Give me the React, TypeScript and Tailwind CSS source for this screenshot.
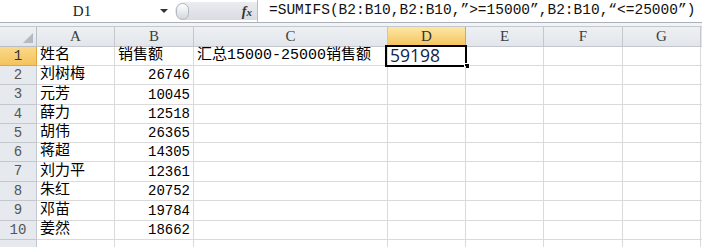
import React from 'react';

type Col = { key: string; w: string };

const cols: Col[] = [
  { key: 'A', w: 'w-[78px]' },
  { key: 'B', w: 'w-[79px]' },
  { key: 'C', w: 'w-[194px]' },
  { key: 'D', w: 'w-[78px]' },
  { key: 'E', w: 'w-[78px]' },
  { key: 'F', w: 'w-[79px]' },
  { key: 'G', w: 'w-[78px]' },
];

const rows = [
  { name: '姓名', amount: '销售额', h: 'h-[19px]' },
  { name: '刘树梅', amount: '26746', h: 'h-[19px]' },
  { name: '元芳', amount: '10045', h: 'h-[20px]' },
  { name: '薛力', amount: '12518', h: 'h-[19px]' },
  { name: '胡伟', amount: '26365', h: 'h-[19px]' },
  { name: '蒋超', amount: '14305', h: 'h-[19px]' },
  { name: '刘力平', amount: '12361', h: 'h-[20px]' },
  { name: '朱红', amount: '20752', h: 'h-[19px]' },
  { name: '邓苗', amount: '19784', h: 'h-[20px]' },
  { name: '姜然', amount: '18662', h: 'h-[19px]' },
];

const cjk = "font-['Liberation_Mono','Noto_Sans_CJK_SC',monospace]";

const FormulaBar = () => (
  <div className="flex h-[23px] border-b border-[#abb1b8] bg-white">
    <div className="flex w-[175px] items-center">
      <span className="flex-1 pl-[4px] text-center text-[15px] text-[#222] font-['Liberation_Serif',serif]">D1</span>
      <span className="mr-[7px] h-0 w-0 border-x-[4px] border-t-[4px] border-x-transparent border-t-[#333]" />
    </div>
    <div className="my-[2px] flex w-[82px] items-center justify-between rounded-l-full bg-gradient-to-b from-[#e9ecf0] to-[#d9dde3] pl-[1px] pr-[5px]">
      <span className="h-[17px] w-[13px] rounded-full border border-[#b0b6bf] bg-gradient-to-b from-white to-[#d3d8de]" />
      <span className="text-[14px] font-bold italic text-[#333] font-['Liberation_Serif',serif]">
        f<span className="text-[11px]">x</span>
      </span>
    </div>
    <div className="flex flex-1 items-center border-l border-[#b8bdc4] pl-[11px]">
      <span className="whitespace-nowrap text-[14.5px] text-[#111] font-['Liberation_Mono',monospace]">
        =SUMIFS(B2:B10,B2:B10,”&gt;=15000”,B2:B10,“&lt;=25000”)
      </span>
    </div>
  </div>
);

const HeaderRow = () => (
  <div className="flex h-[21px] border-t border-[#c4c8ce]">
    <div className="relative w-[37px] border-b border-r border-[#b9bec5] bg-gradient-to-b from-[#eef0f3] to-[#e2e6eb]">
      <svg className="absolute bottom-[3px] right-[3px]" width="10" height="10" viewBox="0 0 10 10">
        <polygon points="10,0 10,10 0,10" fill="#b5bac2" />
      </svg>
    </div>
    {cols.map((c) => (
      <div
        key={c.key}
        className={`${c.w} flex items-center justify-center border-b border-r text-[15px] font-['Liberation_Serif',serif] ${
          c.key === 'D'
            ? 'border-[#e3a63b] bg-gradient-to-b from-[#fde7a4] to-[#f4c35b] text-[#333]'
            : 'border-[#c4c8ce] bg-gradient-to-b from-[#eef0f3] to-[#e2e6eb] text-[#3d3d3d]'
        }`}
      >
        {c.key}
      </div>
    ))}
    <div className="flex-1 border-b border-[#c4c8ce] bg-[#e2e6eb]" />
  </div>
);

const Row = ({ i, name, amount, h }: { i: number; name: string; amount: string; h: string }) => {
  const first = i === 1;
  return (
    <div className={`flex ${h}`}>
      <div
        className={`flex w-[37px] items-center justify-center border-b border-r text-[14px] font-['Liberation_Mono',monospace] ${
          first
            ? 'border-[#e3a63b] bg-gradient-to-b from-[#fbd98a] to-[#f4c35b] text-[#333]'
            : 'border-[#c4c8ce] bg-[#e6e9ed] text-[#555]'
        }`}
      >
        {i}
      </div>
      <div className={`flex w-[78px] items-end border-b border-r border-[#dadada] pl-[3px] text-[15px] leading-[18px] text-black ${cjk}`}>
        {name}
      </div>
      <div
        className={`flex w-[79px] items-end border-b border-r border-[#dadada] leading-[18px] text-black ${
          first ? `pl-[3px] text-[15px] ${cjk}` : "justify-end pr-[3px] text-[14px] font-['Liberation_Mono',monospace]"
        }`}
      >
        {amount}
      </div>
      <div className={`flex w-[194px] items-end border-b border-r border-[#dadada] pl-[3px] text-[15px] leading-[18px] text-black ${cjk}`}>
        {first ? '汇总15000-25000销售额' : ''}
      </div>
      <div className="relative flex w-[78px] items-end border-b border-r border-[#dadada] pl-[2px]">
        {first && (
          <>
            <span className="text-[17.5px] leading-[19px] text-[#142448] font-['Open_Sans',sans-serif]">59198</span>
            <span className="absolute left-[-3px] top-[-2px] h-[22px] w-[82px] border-2 border-black" />
            <span className="absolute left-[76px] top-[16px] h-[6px] w-[6px] border border-white bg-black" />
          </>
        )}
      </div>
      <div className="w-[78px] border-b border-r border-[#dadada]" />
      <div className="w-[79px] border-b border-r border-[#dadada]" />
      <div className="w-[78px] border-b border-r border-[#dadada]" />
      <div className="flex-1 border-b border-[#dadada]" />
    </div>
  );
};

export default function App() {
  return (
    <div className="h-[247px] w-[702px] overflow-hidden bg-white">
      <FormulaBar />
      <div className="h-[3px] bg-[#f1f3f5]" />
      <HeaderRow />
      {rows.map((r, idx) => (
        <Row key={idx} i={idx + 1} name={r.name} amount={r.amount} h={r.h} />
      ))}
      <div className="flex h-[10px]">
        <div className="w-[37px] border-r border-[#c4c8ce] bg-[#e6e9ed]" />
        <div className="w-[78px] border-r border-[#dadada]" />
        <div className="w-[79px] border-r border-[#dadada]" />
        <div className="w-[194px] border-r border-[#dadada]" />
        <div className="w-[78px] border-r border-[#dadada]" />
        <div className="w-[78px] border-r border-[#dadada]" />
        <div className="w-[79px] border-r border-[#dadada]" />
        <div className="w-[78px] border-r border-[#dadada]" />
      </div>
    </div>
  );
}
